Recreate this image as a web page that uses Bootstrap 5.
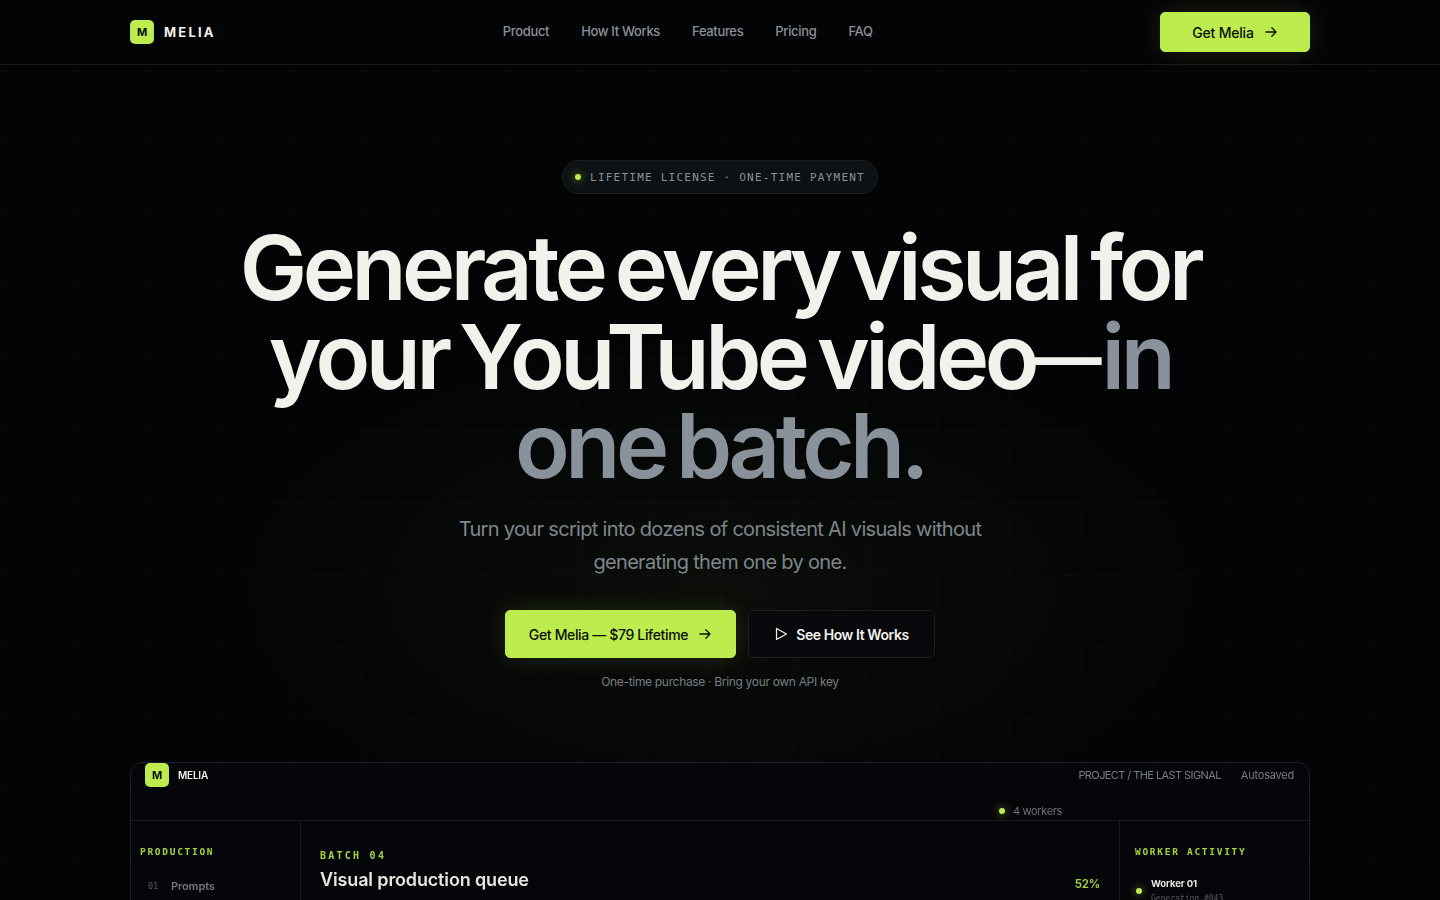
<!DOCTYPE html>
<html lang="en">
<head>
  <meta charset="UTF-8" />
  <meta name="viewport" content="width=device-width, initial-scale=1" />
  <title>Melia</title>
  <link href="https://cdn.jsdelivr.net/npm/bootstrap@5.3.3/dist/css/bootstrap.min.css" rel="stylesheet" />
  <style>
    html, body { height: 100%; }
    body {
      height: 900px;
      overflow: hidden;
      background: #030406;
      color: #f2f1ec;
      font-family: Inter, "Noto Sans", sans-serif;
      position: relative;
    }
    .grid-bg {
      position: absolute;
      inset: 0;
      background-image:
        linear-gradient(rgba(150, 170, 200, .024) 1px, transparent 1px),
        linear-gradient(90deg, rgba(150, 170, 200, .024) 1px, transparent 1px);
      background-size: 72px 72px;
      background-position: 0 -1px;
    }
    .glow-bg {
      position: absolute;
      left: 220px;
      top: 330px;
      width: 1000px;
      height: 520px;
      background: radial-gradient(closest-side, rgba(190, 240, 75, .04), transparent);
    }
    .page-wrap { position: relative; width: 1180px; margin: 0 auto; }

    .top-bar { position: relative; height: 65px; border-bottom: 1px solid #15181d; padding: 0; }
    .top-inner { width: 1180px; margin: 0 auto; height: 64px; }
    .logo-box {
      width: 24px; height: 24px; border-radius: 5px;
      background: #bcec4e; color: #0a0d05;
      font-size: 11px; font-weight: 700;
    }
    .logo-name { font-size: 13px; font-weight: 700; letter-spacing: .17em; color: #f2f1ec; margin-left: 10px; padding-top: 1px; }
    .nav-links { gap: 32px; margin-left: 287px; }
    .nav-links a { font-size: 13px; font-weight: 500; color: #8b9097; text-decoration: none; letter-spacing: -.026em; }
    .btn-lime {
      --bs-btn-bg: #bcec4e; --bs-btn-color: #0c0f06; --bs-btn-border-color: #bcec4e;
      --bs-btn-hover-bg: #cbf56a; --bs-btn-hover-color: #0c0f06; --bs-btn-hover-border-color: #cbf56a;
      font-weight: 500;
      letter-spacing: -.015em;
      box-shadow: 0 0 24px rgba(190, 240, 75, .14);
    }
    .btn-nav { width: 150px; height: 40px; border-radius: 5px; font-size: 14px; gap: 10px; padding: 0; }

    .hero-block { padding-top: 95px; }
    .pill-tag {
      height: 34px; width: 316px; margin: 0 auto; gap: 8px;
      border: 1px solid #1b1f24; border-radius: 17px; background: #0d1114;
      font-family: "DejaVu Sans Mono", monospace; font-size: 11px; letter-spacing: .112em; color: #8b9097;
    }
    .pill-text { padding-top: 2px; padding-left: 1px; }
    .lime-dot { width: 6px; height: 6px; border-radius: 50%; background: #bcec4e; box-shadow: 0 0 8px rgba(190, 240, 75, .7); flex: none; }
    .hero-title {
      width: 1000px;
      margin: 29px auto 0;
      font-size: 90px;
      line-height: 89px;
      font-weight: 600;
      letter-spacing: -.05em;
      word-spacing: -.075em;
      color: #f2f1ec;
    }
    .hero-title span.fade-text { color: #89919b; }
    .short-dash { font-size: .74em; font-weight: 700; letter-spacing: 0; vertical-align: .12em; }
    .hero-sub {
      width: 560px; margin: 23px auto 0;
      font-size: 20px; line-height: 33px; font-weight: 400; letter-spacing: -.034em; color: #7f858c;
    }
    .hero-actions { gap: 12px; margin-top: 31px; }
    .btn-big { height: 48px; border-radius: 5px; font-size: 14px; padding: 0; gap: 10px; letter-spacing: -.025em; }
    .btn-ghost-dark {
      --bs-btn-bg: #07090d; --bs-btn-color: #f2f1ec; --bs-btn-border-color: #1b1f24;
      --bs-btn-hover-bg: #0e1116; --bs-btn-hover-color: #fff; --bs-btn-hover-border-color: #2a2f36;
      font-weight: 600; letter-spacing: -.03em; gap: 8px;
    }
    .hero-note { margin-top: 16px; font-size: 12px; line-height: 16px; letter-spacing: -.027em; color: #767c84; }

    .app-shot {
      position: absolute;
      left: 0; top: 697px;
      width: 1180px; height: 300px;
      background: #050609;
      border: 1px solid #1e2227;
      border-radius: 12px;
      filter: blur(.35px);
    }
    .shot-head { height: 58px; border-bottom: 1px solid #171a1f; padding: 0 15px 0 14px; position: relative; }
    .shot-name { font-size: 10px; font-weight: 600; color: #f2f1ec; margin-left: 9px; letter-spacing: -.02em; line-height: 25px; }
    .shot-meta { font-size: 11px; color: #777d84; letter-spacing: -.02em; gap: 20px; line-height: 25px; }
    .shot-path { letter-spacing: -.053em; }
    .worker-count { position: absolute; left: 868px; top: 40px; gap: 8px; font-size: 11px; color: #6d7278; letter-spacing: -.03em; line-height: 16px; }
    .shot-body { height: 240px; }
    .shot-left { width: 170px; border-right: 1px solid #171a1f; padding: 25px 9px; }
    .shot-main { flex: 1; padding: 29px 19px; border-right: 1px solid #171a1f; }
    .shot-right { width: 189px; padding: 25px 15px; }
    .mono-label { font-family: "DejaVu Sans Mono", monospace; font-size: 9.5px; font-weight: 700; letter-spacing: .18em; color: #a4d340; line-height: 12px; }
    .batch-label { font-size: 10px; letter-spacing: .225em; }
    .nav-num { font-family: "DejaVu Sans Mono", monospace; font-size: 8.5px; color: #55595f; width: 23px; padding-left: 8px; box-sizing: content-box; }
    .nav-item-name { font-size: 11px; font-weight: 600; color: #71767d; letter-spacing: -.01em; }
    .nav-row { margin-top: 20px; }
    .queue-row { margin-top: 6px; }
    .queue-title { font-size: 18px; font-weight: 600; letter-spacing: -.008em; color: #e6e5e0; line-height: 24px; margin: 0; }
    .queue-pct { font-size: 11.5px; font-weight: 600; color: #a4d340; letter-spacing: -.02em; line-height: 16px; }
    .worker-row { gap: 9px; margin-top: 19px; padding-left: 1px; }
    .worker-row .lime-dot { margin-top: 11px; }
    .worker-name { font-size: 9.5px; font-weight: 700; color: #e6e5e0; line-height: 14px; letter-spacing: -.01em; }
    .worker-job { font-family: "DejaVu Sans Mono", monospace; font-size: 8px; color: #565a60; line-height: 12px; margin-top: 2px; }
  </style>
</head>
<body>

<div class="grid-bg"></div>
<div class="glow-bg"></div>

<!-- top nav -->
<nav class="top-bar">
  <div class="top-inner d-flex align-items-center">
    <div class="logo-box d-flex align-items-center justify-content-center">M</div>
    <span class="logo-name">MELIA</span>
    <div class="nav-links d-flex">
      <a href="#">Product</a>
      <a href="#">How It Works</a>
      <a href="#">Features</a>
      <a href="#">Pricing</a>
      <a href="#">FAQ</a>
    </div>
    <a href="#" class="btn btn-lime btn-nav d-inline-flex align-items-center justify-content-center ms-auto">
      Get Melia
      <svg width="14" height="14" viewBox="0 0 14 14" fill="none" stroke="currentColor" stroke-width="1.3" stroke-linecap="round" stroke-linejoin="round"><path d="M2 7h10M7.8 2.8 12 7l-4.2 4.2"/></svg>
    </a>
  </div>
</nav>

<div class="page-wrap">
  <!-- hero -->
  <section class="hero-block text-center">
    <div class="pill-tag d-flex align-items-center justify-content-center">
      <span class="lime-dot"></span>
      <span class="pill-text">LIFETIME LICENSE · ONE-TIME PAYMENT</span>
    </div>
    <h1 class="hero-title">Generate every visual for<br>your YouTube video<span class="short-dash">—</span><span class="fade-text">in<br>one batch.</span></h1>
    <p class="hero-sub">Turn your script into dozens of consistent AI visuals without generating them one by one.</p>
    <div class="hero-actions d-flex justify-content-center">
      <a href="#" class="btn btn-lime btn-big d-inline-flex align-items-center justify-content-center" style="width:231px">
        Get Melia — $79 Lifetime
        <svg width="14" height="14" viewBox="0 0 14 14" fill="none" stroke="currentColor" stroke-width="1.3" stroke-linecap="round" stroke-linejoin="round"><path d="M2 7h10M7.8 2.8 12 7l-4.2 4.2"/></svg>
      </a>
      <a href="#" class="btn btn-ghost-dark btn-big d-inline-flex align-items-center justify-content-center" style="width:187px">
        <svg width="14" height="14" viewBox="0 0 14 14" fill="none" stroke="currentColor" stroke-width="1.2" stroke-linejoin="round"><path d="M2.5 1.5v11L12.5 7z"/></svg>
        See How It Works
      </a>
    </div>
    <div class="hero-note">One-time purchase · Bring your own API key</div>
  </section>

  <!-- app preview -->
  <div class="app-shot">
    <div class="shot-head d-flex align-items-start">
      <div class="logo-box d-flex align-items-center justify-content-center">M</div>
      <span class="shot-name">MELIA</span>
      <div class="shot-meta d-flex ms-auto">
        <span class="shot-path">PROJECT / THE LAST SIGNAL</span>
        <span>Autosaved</span>
      </div>
      <div class="worker-count d-flex align-items-center"><span class="lime-dot"></span>4 workers</div>
    </div>
    <div class="shot-body d-flex">
      <div class="shot-left">
        <div class="mono-label">PRODUCTION</div>
        <div class="nav-row d-flex align-items-center">
          <span class="nav-num">01</span>
          <span class="nav-item-name">Prompts</span>
        </div>
      </div>
      <div class="shot-main">
        <div class="mono-label batch-label">BATCH 04</div>
        <div class="queue-row d-flex align-items-end justify-content-between">
          <h2 class="queue-title">Visual production queue</h2>
          <span class="queue-pct">52%</span>
        </div>
      </div>
      <div class="shot-right">
        <div class="mono-label">WORKER ACTIVITY</div>
        <div class="worker-row d-flex align-items-start">
          <span class="lime-dot"></span>
          <div>
            <div class="worker-name">Worker 01</div>
            <div class="worker-job">Generating #043</div>
          </div>
        </div>
      </div>
    </div>
  </div>
</div>

<script src="https://cdn.jsdelivr.net/npm/bootstrap@5.3.3/dist/js/bootstrap.bundle.min.js"></script>
</body>
</html>
